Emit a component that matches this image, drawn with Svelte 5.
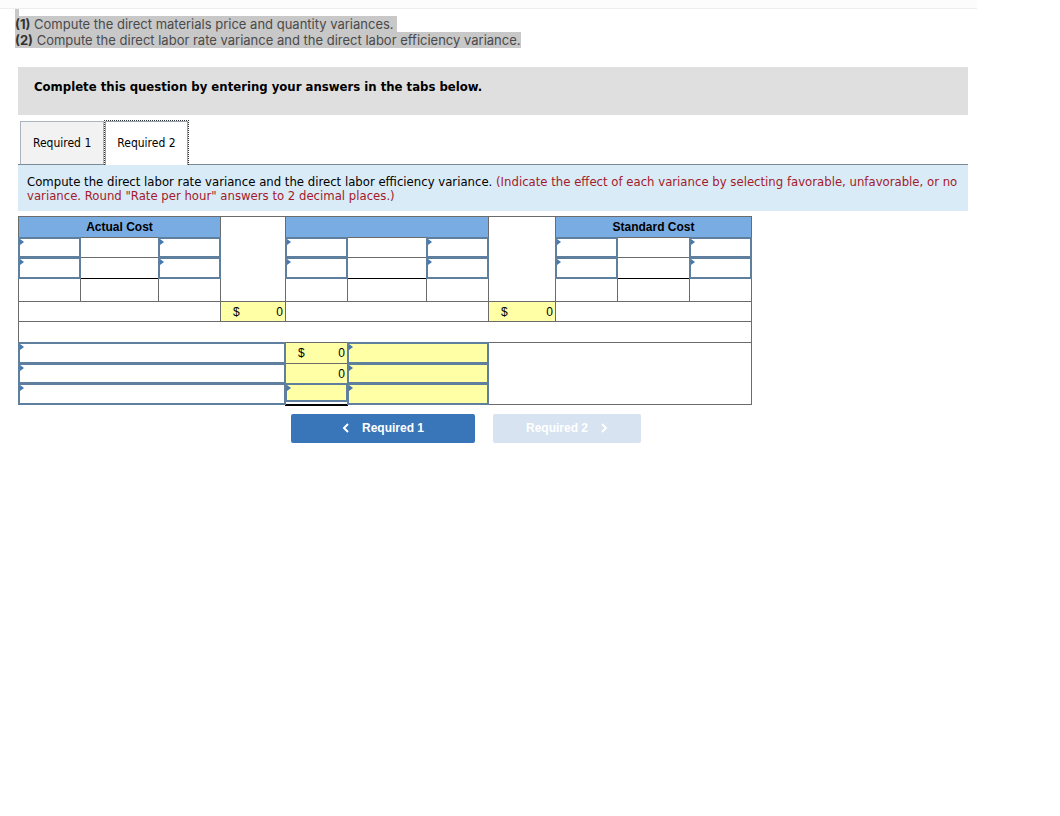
<script>
  let active = 2;
  let answers = {};

  const tabs = [1, 2];
  const colWidths = [62, 78, 62, 65, 62, 79, 62, 67, 62, 72, 62];
  const groups = ["Actual Cost", "", "Standard Cost"];
  const costRows = [1, 2];
  const varianceRows = [1, 2, 3];
</script>

<div class="page">
  <div class="topbar"></div>

  <div class="intro">
    <div class="blank"><mark>&nbsp;</mark></div>
    <div>
      <mark><b>(1)</b> Compute the direct materials price and quantity variances.&nbsp;</mark>
    </div>
    <div>
      <mark><b>(2)</b> Compute the direct labor rate variance and the direct labor efficiency variance.</mark>
    </div>
  </div>

  <main>
    <div class="banner">
      Complete this question by entering your answers in the tabs below.
    </div>

    <div class="tabs" role="tablist">
      {#each tabs as t}
        <button
          role="tab"
          class:active={active === t}
          aria-selected={active === t}
          on:click={() => (active = t)}>Required {t}</button
        >
      {/each}
    </div>

    <div class="instructions">
      Compute the direct labor rate variance and the direct labor efficiency
      variance.
      <span>
        (Indicate the effect of each variance by selecting favorable,
        unfavorable, or no variance. Round "Rate per hour" answers to 2 decimal
        places.)
      </span>
    </div>

    <table>
      <colgroup>
        {#each colWidths as w}
          <col style="width: {w}px" />
        {/each}
      </colgroup>
      <tbody>
        <tr>
          {#each groups as group, g}
            <th colspan="3">{group}</th>
            {#if g < 2}
              <td rowspan="4"></td>
            {/if}
          {/each}
        </tr>
        {#each costRows as r}
          <tr class:short={r === 1}>
            {#each groups as group, g}
              <td class="entry">
                <input aria-label="Quantity {g + 1}, row {r}" bind:value={answers[`q${g}${r}`]} />
              </td>
              <td class:total={r === 2}></td>
              <td class="entry">
                <input aria-label="Rate {g + 1}, row {r}" bind:value={answers[`r${g}${r}`]} />
              </td>
            {/each}
          </tr>
        {/each}
        <tr class="tall">
          {#each groups as group}
            <td></td>
            <td></td>
            <td></td>
          {/each}
        </tr>
        <tr class="short">
          <td colspan="3"></td>
          <td class="calc"><div><span>$</span><span>0</span></div></td>
          <td colspan="3"></td>
          <td class="calc"><div><span>$</span><span>0</span></div></td>
          <td colspan="3"></td>
        </tr>
        <tr>
          <td colspan="11"></td>
        </tr>
        {#each varianceRows as r}
          <tr class:short={r === 2}>
            <td colspan="4" class="entry">
              <input aria-label="Variance name {r}" bind:value={answers[`name${r}`]} />
            </td>
            {#if r < 3}
              <td class="calc" class:total={r === 2}>
                <div><span>{r === 1 ? "$" : ""}</span><span>0</span></div>
              </td>
            {:else}
              <td class="entry grand">
                <input aria-label="Total variance" bind:value={answers.total} />
              </td>
            {/if}
            <td colspan="2" class="entry calc">
              <input aria-label="Variance effect {r}" bind:value={answers[`effect${r}`]} />
            </td>
            {#if r === 1}
              <td colspan="4" rowspan="3"></td>
            {/if}
          </tr>
        {/each}
      </tbody>
    </table>

    <div class="nav">
      <button class="prev" on:click={() => (active = 1)}>
        <svg width="8" height="10" viewBox="0 0 8 10"><path d="M6 1 2 5l4 4" /></svg>
        Required 1
      </button>
      <button class="next" disabled>
        Required 2
        <svg width="8" height="10" viewBox="0 0 8 10"><path d="m2 1 4 4-4 4" /></svg>
      </button>
    </div>
  </main>
</div>

<style>
  :global(body) {
    margin: 0;
    background: #fff;
  }
  .page {
    margin-right: 83px;
    font-family: "DejaVu Sans Condensed", Verdana, sans-serif;
    font-size: 13px;
    color: #000;
  }
  .topbar {
    height: 8px;
    background: #fcfcfc;
    border-bottom: 1px solid #eee;
  }
  .intro {
    padding-left: 15px;
    font-family: Inter, sans-serif;
    font-size: 13px;
    line-height: 16px;
  }
  .intro mark {
    display: inline-block;
    background: #c8c8c8;
    color: #4a4a4a;
  }
  .intro b {
    color: #333;
  }
  .intro .blank {
    height: 7px;
    overflow: hidden;
  }
  main {
    padding: 19px 9px 0 18px;
  }
  .banner {
    padding: 12px 16px 20px;
    background: #dfdfdf;
    font-weight: bold;
    line-height: 16px;
  }
  .tabs {
    display: flex;
    align-items: flex-end;
    padding: 5px 2px 0;
    border-bottom: 1px solid #7b8a99;
  }
  .tabs button {
    height: 43px;
    padding: 0 12px;
    border: 1px solid #a9b4bf;
    border-bottom: none;
    background: #f2f2f2;
    font-family: inherit;
    font-size: 12px;
    color: #000;
  }
  .tabs button.active {
    height: 45px;
    margin-bottom: -1px;
    border: 1px dotted #333;
    border-bottom: none;
    box-shadow:
      inset 1px 1px #93a2b1,
      inset -1px 0 #93a2b1;
    background: #fff;
  }
  .instructions {
    padding: 10px 8px 8px 9px;
    background: #d9ebf7;
    line-height: 14px;
  }
  .instructions span {
    color: #a31a2b;
  }
  table {
    table-layout: fixed;
    width: 734px;
    margin-top: 5px;
    border-collapse: collapse;
    font-family: "Liberation Sans", Arial, sans-serif;
    font-size: 12px;
    line-height: 16px;
  }
  tr {
    height: 21px;
  }
  tr.short {
    height: 20px;
  }
  tr.tall {
    height: 23px;
  }
  td,
  th {
    height: 1px;
    padding: 0;
    border: 1px solid #6b6b6b;
  }
  th {
    background: #7aace4;
  }
  .calc {
    background: #ffffa6;
  }
  .calc div {
    display: flex;
    justify-content: space-between;
    padding: 0 2px 0 12px;
  }
  .total {
    border-bottom: 1px solid #000;
  }
  .entry {
    position: relative;
  }
  /* corner marker on editable cells */
  .entry::before {
    content: "";
    position: absolute;
    top: 1px;
    left: 1px;
    border: 3px solid transparent;
    border-left: 4px solid #4579b0;
    border-right: none;
  }
  .entry input {
    display: block;
    box-sizing: border-box;
    width: 100%;
    height: 100%;
    padding: 0 4px;
    border: 1px solid #5f7f9f;
    border-radius: 0;
    outline: 1px solid #5f7f9f;
    background: transparent;
    font: inherit;
  }
  .grand {
    border-bottom: 2px solid #000;
    vertical-align: top;
  }
  .entry.grand input {
    height: 17px;
    background: #ffffa6;
  }
  .nav {
    display: flex;
    gap: 18px;
    padding: 8px 0 0 273px;
  }
  .nav button {
    display: flex;
    align-items: center;
    justify-content: center;
    gap: 12px;
    height: 29px;
    border: none;
    border-radius: 2px;
    background: #3875b9;
    color: #fff;
    font: bold 12px "Liberation Sans", Arial, sans-serif;
  }
  .nav .prev {
    width: 184px;
  }
  .nav .next {
    width: 148px;
    background: #d7e3f0;
  }
  .nav path {
    fill: none;
    stroke: #fff;
    stroke-width: 2;
  }
</style>
